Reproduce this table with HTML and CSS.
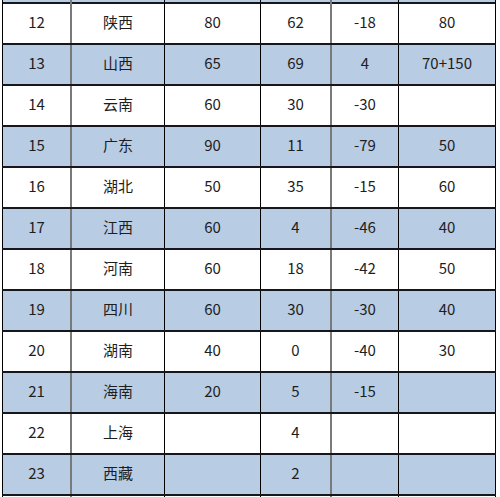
FILE: index.html
```html
<!DOCTYPE html>
<html lang="zh-CN">
<head>
<meta charset="utf-8">
<link rel="stylesheet" href="styles.css">
</head>
<body>
<div class="sheet">
  <div class="row blue cut">
    <div class="c c1"></div><div class="c c2"></div><div class="c c3"></div><div class="c c4"></div><div class="c c5"></div><div class="c c6"></div>
  </div>
  <div class="row">
    <div class="c c1">12</div><div class="c c2">陕西</div><div class="c c3">80</div><div class="c c4">62</div><div class="c c5">-18</div><div class="c c6">80</div>
  </div>
  <div class="row blue">
    <div class="c c1">13</div><div class="c c2">山西</div><div class="c c3">65</div><div class="c c4">69</div><div class="c c5">4</div><div class="c c6">70+150</div>
  </div>
  <div class="row">
    <div class="c c1">14</div><div class="c c2">云南</div><div class="c c3">60</div><div class="c c4">30</div><div class="c c5">-30</div><div class="c c6"></div>
  </div>
  <div class="row blue">
    <div class="c c1">15</div><div class="c c2">广东</div><div class="c c3">90</div><div class="c c4">11</div><div class="c c5">-79</div><div class="c c6">50</div>
  </div>
  <div class="row">
    <div class="c c1">16</div><div class="c c2">湖北</div><div class="c c3">50</div><div class="c c4">35</div><div class="c c5">-15</div><div class="c c6">60</div>
  </div>
  <div class="row blue">
    <div class="c c1">17</div><div class="c c2">江西</div><div class="c c3">60</div><div class="c c4">4</div><div class="c c5">-46</div><div class="c c6">40</div>
  </div>
  <div class="row">
    <div class="c c1">18</div><div class="c c2">河南</div><div class="c c3">60</div><div class="c c4">18</div><div class="c c5">-42</div><div class="c c6">50</div>
  </div>
  <div class="row blue">
    <div class="c c1">19</div><div class="c c2">四川</div><div class="c c3">60</div><div class="c c4">30</div><div class="c c5">-30</div><div class="c c6">40</div>
  </div>
  <div class="row">
    <div class="c c1">20</div><div class="c c2">湖南</div><div class="c c3">40</div><div class="c c4">0</div><div class="c c5">-40</div><div class="c c6">30</div>
  </div>
  <div class="row blue">
    <div class="c c1">21</div><div class="c c2">海南</div><div class="c c3">20</div><div class="c c4">5</div><div class="c c5">-15</div><div class="c c6"></div>
  </div>
  <div class="row">
    <div class="c c1">22</div><div class="c c2">上海</div><div class="c c3"></div><div class="c c4">4</div><div class="c c5"></div><div class="c c6"></div>
  </div>
  <div class="row blue">
    <div class="c c1">23</div><div class="c c2">西藏</div><div class="c c3"></div><div class="c c4">2</div><div class="c c5"></div><div class="c c6"></div>
  </div>
  <div class="row tail">
    <div class="c c1"></div><div class="c c2"></div><div class="c c3"></div><div class="c c4"></div><div class="c c5"></div><div class="c c6"></div>
  </div>
</div>
</body>
</html>
```
FILE: styles.css
```css
html, body {
  margin: 0;
  padding: 0;
  background: #ffffff;
}
.sheet {
  margin-left: 2px;
  width: 494px;
  height: 497px;
  overflow: hidden;
  font-family: "Noto Sans CJK SC", "Noto Sans", sans-serif;
  font-size: 15px;
  color: #1e1e1e;
}
.row {
  display: flex;
  height: 41px;
  border-top: 2px solid #15171c;
  box-sizing: border-box;
  background: #ffffff;
}
.row.blue {
  background: #b8cce4;
}
.row.cut {
  height: 2px;
  border-top: none;
}
.c {
  box-sizing: border-box;
  display: flex;
  align-items: center;
  justify-content: center;
  border-left: 1px solid #000000;
  line-height: 1;
  padding-bottom: 5px;
}
.c1 { width: 68px; }
.c2 { width: 94px; border-left: 2px solid #7a7a7a; }
.c3 { width: 96px; }
.c4 { width: 70px; }
.c5 { width: 68px; border-left: 2px solid #7a7a7a; }
.c6 { width: 98px; border-right: 1px solid #000000; }
```
